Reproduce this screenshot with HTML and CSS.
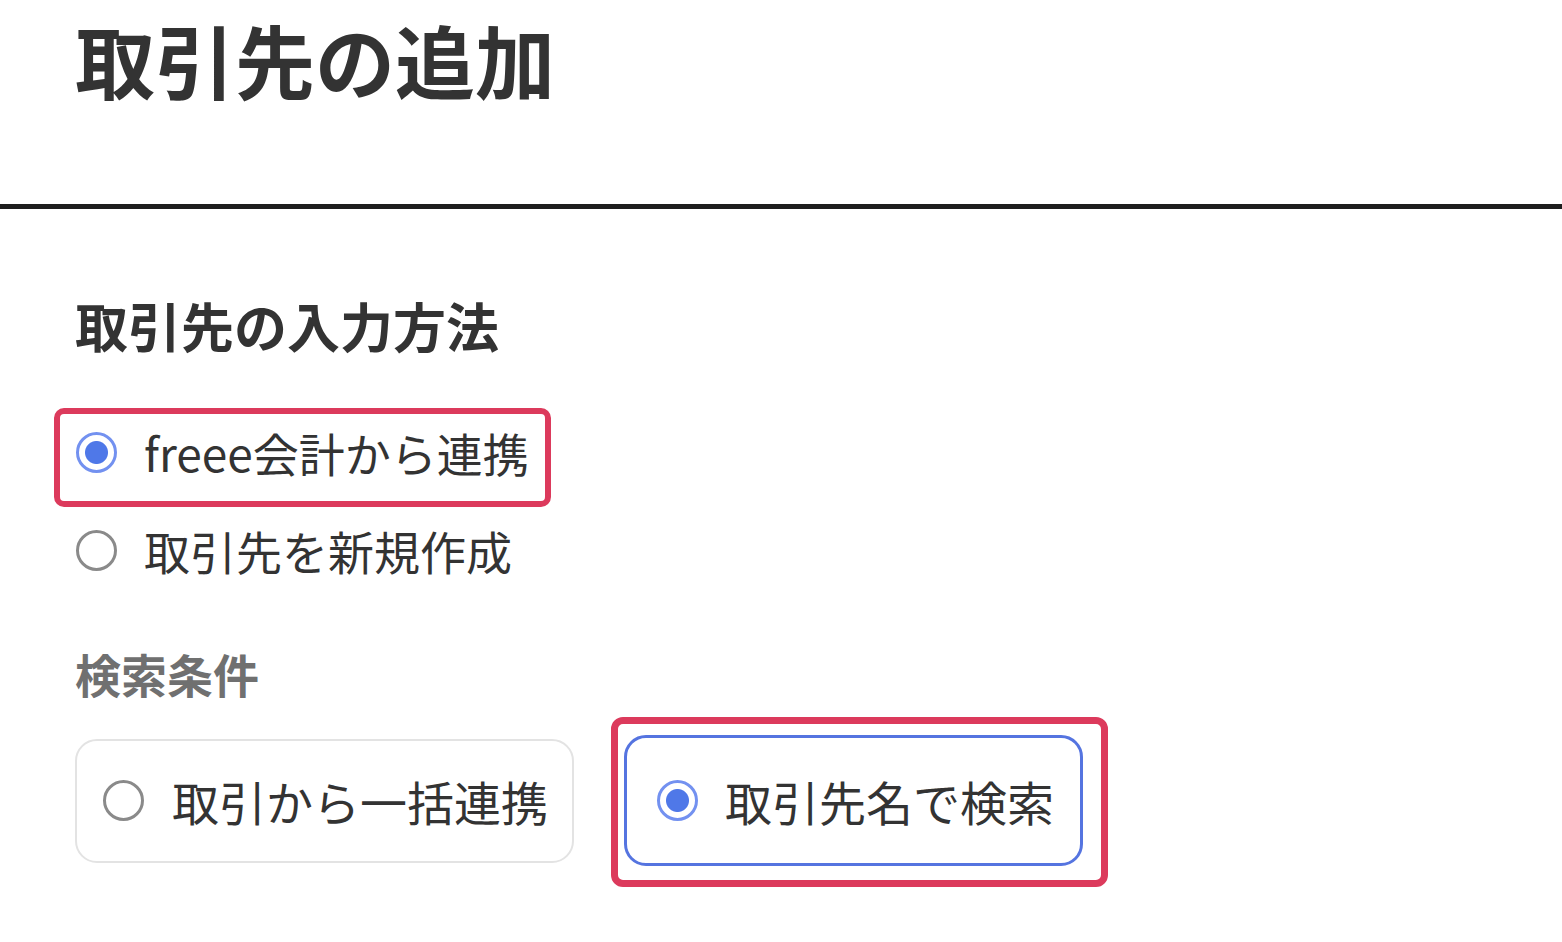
FILE: index.html
```html
<!DOCTYPE html>
<html lang="ja">
<head>
<meta charset="utf-8">
<title>取引先の追加</title>
<link rel="stylesheet" href="styles.css">
</head>
<body>
<header class="page-header">
  <h1 class="page-title">取引先の追加</h1>
</header>
<hr class="divider">
<main class="content">
  <h2 class="section-title">取引先の入力方法</h2>
  <div class="radio-list">
    <div class="annotated">
      <label class="radio-row">
        <span class="radio checked"></span>
        <span class="radio-label">freee会計から連携</span>
      </label>
      <div class="mark mark-row"></div>
    </div>
    <label class="radio-row">
      <span class="radio"></span>
      <span class="radio-label">取引先を新規作成</span>
    </label>
  </div>
  <h3 class="sub-title">検索条件</h3>
  <div class="card-row">
    <label class="card">
      <span class="radio"></span>
      <span class="radio-label">取引から一括連携</span>
    </label>
    <div class="annotated">
      <label class="card selected">
        <span class="radio checked"></span>
        <span class="radio-label">取引先名で検索</span>
      </label>
      <div class="mark mark-card"></div>
    </div>
  </div>
</main>
</body>
</html>
```

FILE: styles.css
```css
* { box-sizing: border-box; }
html, body {
  margin: 0;
  padding: 0;
  background: #ffffff;
}
body {
  min-height: 100vh;
  font-family: "Noto Sans CJK JP", "Noto Sans", sans-serif;
  color: #333333;
}
.page-header {
  padding: 18px 0 0 75px;
  height: 204px;
}
.page-title {
  margin: 0;
  font-size: 80px;
  line-height: 1;
  font-weight: 700;
  color: #333333;
}
.divider {
  margin: 0;
  border: 0;
  height: 5px;
  background: #1e1e1e;
}
.content {
  padding: 90px 0 60px 77px;
}
.section-title {
  margin: 0 0 0 -2px;
  font-size: 53px;
  line-height: 1;
  font-weight: 700;
  color: #333333;
}
.radio-list {
  margin-top: 51px;
  display: flex;
  flex-direction: column;
}
.annotated {
  position: relative;
}
.radio-row {
  display: flex;
  align-items: center;
  height: 98px;
  gap: 27px;
  margin-left: -1px;
}
.radio {
  flex: none;
  width: 41px;
  height: 41px;
  border-radius: 50%;
  border: 3px solid #8a8a8a;
  background: #ffffff;
}
.radio.checked {
  border-color: #7391f0;
  background: radial-gradient(circle, #4f78e8 0 11px, #ffffff 12px);
}
.radio-label {
  font-size: 46px;
  line-height: 1;
  font-weight: 400;
  color: #333333;
  white-space: nowrap;
}
.card .radio-label {
  font-size: 47px;
}
.mark {
  position: absolute;
  border: 6px solid #dc3a5c;
  border-radius: 10px;
  pointer-events: none;
}
.mark-row {
  left: -23px;
  top: 5px;
  width: 497px;
  height: 99px;
}
.sub-title {
  margin: 51px 0 0 -2px;
  font-size: 46px;
  line-height: 1;
  font-weight: 700;
  color: #707070;
}
.card-row {
  margin: 39px 0 0 -2px;
  display: flex;
  align-items: center;
  gap: 50px;
}
.card {
  display: flex;
  align-items: center;
  gap: 28px;
  height: 124px;
  padding: 0 24px 0 26px;
  border: 2px solid #e3e3e3;
  border-radius: 22px;
  background: #ffffff;
}
.card.selected {
  height: 131px;
  gap: 27px;
  border: 3px solid #5574e0;
  padding: 0 26px 0 30px;
}
.mark-card {
  left: -13px;
  top: -18px;
  width: 497px;
  height: 170px;
  border-width: 7px;
  border-radius: 12px;
}
```
